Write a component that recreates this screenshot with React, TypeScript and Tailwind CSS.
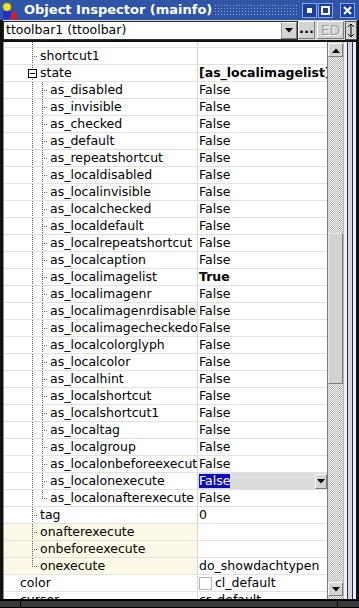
import React from "react";

type Guide = "pipe" | "tee" | "ell" | "box";

type Row = {
  name: string;
  guides: Guide[];
  value?: string;
  bold?: boolean;
  event?: boolean;
  kind?: "edit" | "color";
  short?: boolean;
};

const asProps = [
  "as_disabled",
  "as_invisible",
  "as_checked",
  "as_default",
  "as_repeatshortcut",
  "as_localdisabled",
  "as_localinvisible",
  "as_localchecked",
  "as_localdefault",
  "as_localrepeatshortcut",
  "as_localcaption",
  "as_localimagelist",
  "as_localimagenr",
  "as_localimagenrdisabled",
  "as_localimagecheckedoffset",
  "as_localcolorglyph",
  "as_localcolor",
  "as_localhint",
  "as_localshortcut",
  "as_localshortcut1",
  "as_localtag",
  "as_localgroup",
  "as_localonbeforeexecute",
  "as_localonexecute",
];

const rows: Row[] = [
  { name: "", guides: ["pipe"], short: true },
  { name: "shortcut1", guides: ["tee"] },
  { name: "state", guides: ["box"], value: "[as_localimagelist]", bold: true },
  ...asProps.map((name): Row => ({
    name,
    guides: ["pipe", "tee"],
    value: "False",
    bold: name === "as_localimagelist",
    kind: name === "as_localonexecute" ? "edit" : undefined,
  })).map((r) => (r.name === "as_localimagelist" ? { ...r, value: "True" } : r)),
  { name: "as_localonafterexecute", guides: ["pipe", "ell"], value: "False" },
  { name: "tag", guides: ["tee"], value: "0" },
  { name: "onafterexecute", guides: ["tee"], event: true },
  { name: "onbeforeexecute", guides: ["tee"], event: true },
  { name: "onexecute", guides: ["ell"], event: true, value: "do_showdachtypen" },
  { name: "color", guides: [], value: "cl_default", kind: "color" },
  { name: "cursor", guides: [], value: "cr_default" },
];

const DOT = "#5a5a5a";

function TreeGuide({ kind, h }: { kind: Guide; h: number }) {
  return (
    <svg width="10" height={h} className="block shrink-0" shapeRendering="crispEdges">
      <line x1="4.5" y1="0" x2="4.5" y2={kind === "ell" ? 9 : h} stroke={DOT} strokeDasharray="1 1" />
      {(kind === "tee" || kind === "ell") && (
        <line x1="6" y1="8.5" x2="10" y2="8.5" stroke={DOT} strokeDasharray="1 1" />
      )}
      {kind === "box" && (
        <>
          <rect x="0.5" y="4.5" width="8" height="8" fill="#fff" stroke="#000" />
          <line x1="2" y1="8.5" x2="7" y2="8.5" stroke="#000" />
        </>
      )}
    </svg>
  );
}

function DownTriangle() {
  return (
    <svg width="8" height="5" viewBox="0 0 8 5">
      <path d="M0 0h8L4 4.5z" fill="#000" />
    </svg>
  );
}

function GridRow({ row }: { row: Row }) {
  const h = row.short ? 5 : 16;
  return (
    <div className={`flex shrink-0 border-b border-[#e2e2e2] ${row.short ? "h-[6px]" : "h-[17px]"}`}>
      <div
        className={`flex w-[194px] shrink-0 items-center overflow-hidden whitespace-nowrap border-r border-[#d6d6d6] ${
          row.event ? "bg-[#fcf9e6]" : ""
        } ${row.guides.length === 0 ? "pl-[16px]" : ""}`}
      >
        {row.guides.length > 0 && <div className="w-[24px] shrink-0" />}
        {row.guides.map((g, i) => (
          <TreeGuide key={i} kind={g} h={h} />
        ))}
        {row.name && <span className={row.guides.length ? "ml-[2px]" : ""}>{row.name}</span>}
      </div>
      {row.kind === "edit" ? (
        <div className="flex min-w-0 flex-1 items-center bg-[#dcdcdc] pl-[1px]">
          <span className="bg-[#0b0bb8] leading-[14px] text-white">{row.value}</span>
          <div className="flex-1" />
          <div className="flex h-[15px] w-[12px] items-center justify-center border border-t-white border-l-white border-r-[#7a7a7a] border-b-[#7a7a7a] bg-[#d4d4d4]">
            <DownTriangle />
          </div>
        </div>
      ) : (
        <div
          className={`flex min-w-0 flex-1 items-center overflow-hidden whitespace-nowrap pl-[1px] ${
            row.bold ? "font-bold" : ""
          }`}
        >
          {row.kind === "color" && (
            <span className="mr-[3px] h-[13px] w-[13px] shrink-0 border border-[#b4b4b4] bg-white" />
          )}
          {row.value}
        </div>
      )}
    </div>
  );
}

function AppIcon() {
  return (
    <svg width="16" height="17" viewBox="0 0 16 17" className="shrink-0">
      <rect x="1" y="8" width="8" height="9" fill="#1d2fd8" />
      <path d="M11.5 7.5L16 17H7z" fill="#e01818" />
      <circle cx="5" cy="5" r="4" fill="#f2e21a" stroke="#b9a800" strokeWidth="0.6" />
    </svg>
  );
}

function TitleDots() {
  return (
    <svg className="mx-[3px] h-[11px] flex-1" shapeRendering="crispEdges">
      <defs>
        <pattern id="tdots" width="3" height="3" patternUnits="userSpaceOnUse">
          <rect width="1" height="1" fill="#8ea6dc" />
        </pattern>
      </defs>
      <rect width="100%" height="100%" fill="url(#tdots)" />
    </svg>
  );
}

function TitleButton({ children }: { children: React.ReactNode }) {
  return (
    <div className="flex h-[15px] w-[15px] items-center justify-center border border-[#8aa6e8] bg-[#1e3e9c]">
      {children}
    </div>
  );
}

export default function App() {
  return (
    <div className="flex h-[608px] w-[359px] flex-col overflow-hidden bg-[#111] font-['DejaVu_Sans',sans-serif] text-[12.5px] leading-[16px] text-black">
      {/* title bar */}
      <div className="flex h-[20px] shrink-0 items-center bg-[#3155a6] pl-[2px] pr-[4px]">
        <AppIcon />
        <span className="ml-[6px] text-[13px] font-bold text-white">Object Inspector (mainfo)</span>
        <TitleDots />
        <TitleButton>
          <span className="h-[5px] w-[5px] bg-white" />
        </TitleButton>
        <div className="ml-[1px]">
          <TitleButton>
            <span className="h-[9px] w-[9px] border-2 border-white" />
          </TitleButton>
        </div>
        <div className="ml-[7px]">
          <TitleButton>
            <svg width="9" height="9" viewBox="0 0 9 9">
              <path d="M1 1l7 7M8 1L1 8" stroke="#fff" strokeWidth="2.2" />
            </svg>
          </TitleButton>
        </div>
      </div>

      {/* component selector */}
      <div className="flex h-[20px] shrink-0 items-center bg-[#d4d4d4]">
        <div className="h-full w-[3px] bg-[#111]" />
        <div className="flex h-[19px] w-[295px] items-center border border-[#2e2e2e] bg-white">
          <span className="flex-1 pl-[2px]">ttoolbar1 (ttoolbar)</span>
          <div className="flex h-full w-[16px] items-center justify-center border border-t-white border-l-[#9a9a9a] border-r-[#7a7a7a] border-b-[#7a7a7a] bg-[#d4d4d4]">
            <DownTriangle />
          </div>
        </div>
        <div className="flex h-[18px] w-[17px] items-center justify-center border border-t-white border-l-white border-r-[#7a7a7a] border-b-[#7a7a7a] bg-[#d4d4d4] text-[13px] font-bold leading-none">
          <span className="-mt-[4px]">...</span>
        </div>
        <div className="ml-[2px] flex h-[18px] w-[27px] items-center justify-center border border-t-white border-l-white border-r-[#7a7a7a] border-b-[#7a7a7a] bg-[#d4d4d4] text-[14px] text-[#a2a2a2] [text-shadow:1px_1px_0_#fff]">
          ED
        </div>
        <div className="ml-[1px] flex h-[19px] w-[12px] items-center justify-center border border-[#555] bg-[#d4d4d4]">
          <svg width="8" height="15" viewBox="0 0 8 15">
            <path d="M4 1v13M1 4l3-3 3 3M1 11l3 3 3-3" stroke="#000" strokeWidth="1" fill="none" />
          </svg>
        </div>
        <div className="h-full w-[2px] bg-[#111]" />
      </div>

      {/* property grid */}
      <div className="flex h-[559px] shrink-0 border-t-2 border-[#111]">
        <div className="w-[4px] shrink-0 border-r border-[#8a8a8a] bg-[#111]" />
        <div className="flex w-[323px] shrink-0 flex-col overflow-hidden bg-white">
          {rows.map((r, i) => (
            <GridRow key={i} row={r} />
          ))}
        </div>

        {/* scrollbar */}
        <div className="flex w-[16px] shrink-0 flex-col border-l border-[#7c7c7c] bg-[repeating-conic-gradient(#b8b8b8_0%_25%,#f2f2f2_0%_50%)] bg-[length:2px_2px]">
          <div className="mt-[1px] flex h-[14px] items-center justify-center border border-t-white border-l-white border-r-[#7a7a7a] border-b-[#7a7a7a] bg-[#d4d4d4]">
            <svg width="8" height="5" viewBox="0 0 8 5">
              <path d="M0 5h8L4 0.5z" fill="#000" />
            </svg>
          </div>
          <div className="flex flex-1 flex-col">
            <div className="h-[176px]" />
            <div className="h-[151px] border border-t-[#e8e8e8] border-l-[#e8e8e8] border-r-[#7a7a7a] border-b-[#7a7a7a] bg-[#d2d2d2]" />
          </div>
          <div className="mb-[3px] flex h-[14px] items-center justify-center border border-t-white border-l-white border-r-[#7a7a7a] border-b-[#7a7a7a] bg-[#d4d4d4]">
            <DownTriangle />
          </div>
        </div>

        {/* splitter */}
        <div className="flex w-[13px] shrink-0">
          <div className="w-[1px] bg-[#b4b4b4]" />
          <div className="w-[3px] bg-[#f2f2f2]" />
          <div className="w-[1px] bg-[#2424a4]" />
          <div className="w-[4px] bg-[#d6d6d6]" />
          <div className="w-[1px] bg-[#2424a4]" />
          <div className="w-[3px] bg-[#f2f2f2]" />
        </div>
        <div className="w-[3px] shrink-0 bg-[#111]" />
      </div>

      {/* frame bottom */}
      <div className="flex h-[9px] shrink-0 border-t-2 border-b border-black bg-[#3a3a3a]">
        <div className="w-[21px] border-r border-black" />
        <div className="w-[317px] border-r border-black" />
      </div>
    </div>
  );
}
